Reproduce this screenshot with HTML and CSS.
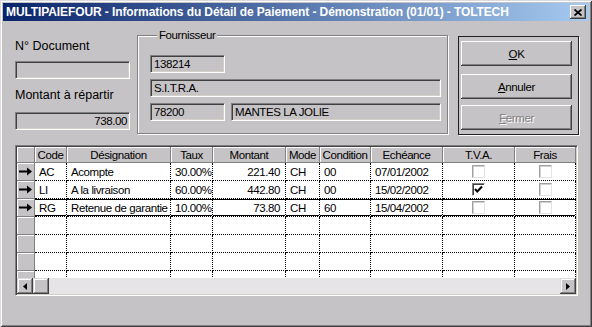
FILE: index.html
```html
<!DOCTYPE html>
<html lang="fr">
<head>
    <meta charset="UTF-8">
    <title>MULTIPAIEFOUR</title>
    <link rel="stylesheet" href="styles.css">
</head>
<body>
<div class="win">
    <div class="title">
        <span class="title-text">MULTIPAIEFOUR - Informations du Détail de Paiement - Démonstration (01/01) - TOLTECH</span>
        <span class="close"><svg width="8" height="7" viewBox="0 0 8 7"><path d="M0.5 0.5 L7.5 6.5 M7.5 0.5 L0.5 6.5" stroke="#000" stroke-width="1.7" fill="none"/></svg></span>
    </div>
    <div class="client">
        <div class="top">
            <div class="left">
                <label class="lbl lbl-1">N° Document</label>
                <div class="fld fld-doc"></div>
                <label class="lbl lbl-2">Montant à répartir</label>
                <div class="fld fld-mt">738.00</div>
            </div>
            <fieldset class="group">
                <legend>Fournisseur</legend>
                <div class="g-line"><div class="fld w-code">138214</div></div>
                <div class="g-line"><div class="fld w-full">S.I.T.R.A.</div></div>
                <div class="g-line"><div class="fld w-code">78200</div><div class="fld w-city">MANTES LA JOLIE</div></div>
            </fieldset>
            <div class="btns">
                <button class="btn"><u>O</u>K</button>
                <button class="btn btn-2"><u>A</u>nnuler</button>
                <button class="btn btn-3 off"><u>F</u>ermer</button>
            </div>
        </div>

        <div class="grid">
            <div class="row head">
                <div class="h"></div>
                <div class="h">Code</div>
                <div class="h">Désignation</div>
                <div class="h">Taux</div>
                <div class="h">Montant</div>
                <div class="h">Mode</div>
                <div class="h">Condition</div>
                <div class="h">Echéance</div>
                <div class="h">T.V.A.</div>
                <div class="h">Frais</div>
            </div>
            <div class="g-body">
                <div class="row">
                    <div class="ind"><svg width="14" height="9" viewBox="0 0 14 9"><path d="M0 3.5h9v2H0z M8 0.5 L13 4.5 L8 8.5z" fill="#000"/></svg></div>
                    <div class="c">AC</div>
                    <div class="c">Acompte</div>
                    <div class="c r">30.00%</div>
                    <div class="c r m">221.40</div>
                    <div class="c">CH</div>
                    <div class="c">00</div>
                    <div class="c">07/01/2002</div>
                    <div class="c ck"><span class="chk"></span></div>
                    <div class="c ck"><span class="chk"></span></div>
                </div>
                <div class="row">
                    <div class="ind"><svg width="14" height="9" viewBox="0 0 14 9"><path d="M0 3.5h9v2H0z M8 0.5 L13 4.5 L8 8.5z" fill="#000"/></svg></div>
                    <div class="c">LI</div>
                    <div class="c">A la livraison</div>
                    <div class="c r">60.00%</div>
                    <div class="c r m">442.80</div>
                    <div class="c">CH</div>
                    <div class="c">00</div>
                    <div class="c">15/02/2002</div>
                    <div class="c ck"><span class="chk on"><svg width="9" height="9" viewBox="0 0 9 9"><path d="M1 4 L3.3 6.5 L8 1.5" stroke="#000" stroke-width="2" fill="none"/></svg></span></div>
                    <div class="c ck"><span class="chk"></span></div>
                </div>
                <div class="row sel">
                    <div class="ind"><svg width="14" height="9" viewBox="0 0 14 9"><path d="M0 3.5h9v2H0z M8 0.5 L13 4.5 L8 8.5z" fill="#000"/></svg></div>
                    <div class="c">RG</div>
                    <div class="c">Retenue de garantie</div>
                    <div class="c r">10.00%</div>
                    <div class="c r m">73.80</div>
                    <div class="c">CH</div>
                    <div class="c">60</div>
                    <div class="c">15/04/2002</div>
                    <div class="c ck"><span class="chk"></span></div>
                    <div class="c ck"><span class="chk"></span></div>
                </div>
                <div class="row">
                    <div class="ind"></div><div class="c"></div><div class="c"></div><div class="c"></div><div class="c"></div><div class="c"></div><div class="c"></div><div class="c"></div><div class="c"></div><div class="c"></div>
                </div>
                <div class="row">
                    <div class="ind"></div><div class="c"></div><div class="c"></div><div class="c"></div><div class="c"></div><div class="c"></div><div class="c"></div><div class="c"></div><div class="c"></div><div class="c"></div>
                </div>
                <div class="row">
                    <div class="ind"></div><div class="c"></div><div class="c"></div><div class="c"></div><div class="c"></div><div class="c"></div><div class="c"></div><div class="c"></div><div class="c"></div><div class="c"></div>
                </div>
                <div class="row">
                    <div class="ind"></div><div class="c"></div><div class="c"></div><div class="c"></div><div class="c"></div><div class="c"></div><div class="c"></div><div class="c"></div><div class="c"></div><div class="c"></div>
                </div>
            </div>
            <div class="hscroll">
                <div class="sb"><svg width="4" height="7" viewBox="0 0 4 7"><path d="M4 0v7L0 3.5z" fill="#000"/></svg></div>
                <div class="sb thumb"></div>
                <div class="track"></div>
                <div class="sb"><svg width="4" height="7" viewBox="0 0 4 7"><path d="M0 0v7l4-3.5z" fill="#000"/></svg></div>
            </div>
        </div>
    </div>
</div>
</body>
</html>
```

FILE: styles.css
```css
*{
    box-sizing: border-box;
}
body{
    margin: 0;
    background: #c6c3c6;
    font-family: "Liberation Sans", Arial, sans-serif;
    font-size: 12px;
    color: #000;
}
.win{
    width: 592px;
    height: 327px;
    padding: 3px;
    background: #c6c3c6;
    box-shadow: inset 1px 1px #dcdadc, inset -1px -1px #404040, inset 2px 2px #fff, inset -2px -2px #808080;
    display: flex;
    flex-direction: column;
}
/* barre de titre */
.title{
    height: 18px;
    flex: none;
    display: flex;
    align-items: center;
    justify-content: space-between;
    background: linear-gradient(to right, #0a246a, #a6caf0);
    padding: 0 3px 0 3px;
}
.title-text{
    color: #fff;
    font-weight: bold;
    font-size: 12px;
    letter-spacing: -0.1px;
    white-space: nowrap;
}
.close{
    width: 16px;
    height: 14px;
    background: #c6c3c6;
    box-shadow: inset -1px -1px #404040, inset 1px 1px #fff, inset -2px -2px #808080;
    display: flex;
    align-items: center;
    justify-content: center;
    padding-top: 1px;
}
.client{
    flex: 1;
    padding: 7px 0 0 12px;
}
.top{
    display: flex;
    align-items: flex-start;
}
/* colonne gauche */
.left{
    width: 115px;
    display: flex;
    flex-direction: column;
}
.lbl{
    font-size: 12.5px;
    line-height: 16px;
    height: 16px;
}
.lbl-1{ margin-top: 10px; }
.fld-doc{ margin-top: 7px; }
.lbl-2{ margin-top: 8px; }
.fld-mt{ margin-top: 9px; text-align: right; padding-right: 3px; }

.fld, .group legend, .btn, .grid{
    font-size: 11.5px;
    letter-spacing: -0.4px;
}
.fld{
    height: 18px;
    border: 1px solid;
    border-color: #808080 #fff #fff #808080;
    box-shadow: inset 1px 1px #404040, inset -1px -1px #d4d0c8;
    padding: 1px 2px 0 3px;
    line-height: 15px;
    white-space: nowrap;
}
/* groupe fournisseur */
.group{
    margin: 0 0 0 7px;
    width: 311px;
    padding: 13px 5px 12px 12px;
    border: 1px solid #808080;
    box-shadow: inset 1px 1px #fff, 1px 1px #fff;
    min-width: 0;
}
.group legend{
    margin-left: 7px;
    padding: 0 2px;
    background: #c6c3c6;
    line-height: 14px;
}
.g-line{
    display: flex;
    gap: 6px;
    margin-bottom: 6px;
}
.g-line:last-child{
    margin-bottom: 0;
}
.w-code{ width: 75px; }
.w-full{ width: 291px; }
.w-city{ width: 210px; }
/* boutons */
.btns{
    margin: 8px 0 0 10px;
    width: 121px;
    height: 99px;
    border: 1px solid #202020;
    box-shadow: 1px 1px #fff;
    padding: 4px 5px 0 2px;
    display: flex;
    flex-direction: column;
}
.btn{
    height: 25px;
    width: 111px;
    border: 0;
    margin: 0;
    background: #c6c3c6;
    box-shadow: inset -1px -1px #404040, inset 1px 1px #fff, inset -2px -2px #808080;
    font-family: "Liberation Sans", Arial, sans-serif;
    color: #000;
    padding: 0;
}
.btn-2{ margin-top: 8px; }
.btn-3{ margin-top: 6px; }
.btn.off{
    color: #808080;
    text-shadow: 1px 1px #fff;
}
/* grille */
.grid{
    margin-top: 10px;
    width: 563px;
    border: 1px solid;
    border-color: #808080 #fff #fff #808080;
    box-shadow: inset 1px 1px #404040, inset -1px -1px #d4d0c8;
    padding: 1px;
}
.row{
    display: grid;
    grid-template-columns: 18px 32px 104px 42px 73px 34px 51px 72px 72px 61px;
    height: 18px;
}
.row.head{
    height: 16px;
}
.h{
    background: #c6c3c6;
    border-right: 1px solid #808080;
    border-bottom: 1px solid #808080;
    box-shadow: inset 1px 1px #fff;
    text-align: center;
    padding-top: 1px;
    line-height: 14px;
    white-space: nowrap;
    overflow: hidden;
}
.g-body{
    height: 115px;
    overflow: hidden;
}
.ind{
    background: #c6c3c6;
    border-right: 1px solid #808080;
    border-bottom: 1px solid #808080;
    box-shadow: inset 1px 1px #fff;
    display: flex;
    align-items: center;
    justify-content: center;
}
.c{
    background: #fff;
    border-right: 1px dotted #000;
    border-bottom: 1px dotted #000;
    padding: 1px 3px 0 4px;
    line-height: 16px;
    white-space: nowrap;
    overflow: hidden;
}
.c.r{
    text-align: right;
    padding-right: 2px;
}
.c.m{
    padding-right: 5px;
}
.c.ck{
    display: flex;
    align-items: center;
    justify-content: center;
    padding: 0;
}
.row.sel .c{
    box-shadow: inset 0 1px #000, inset 0 -1px #000;
}
.chk{
    width: 13px;
    height: 13px;
    background: #fff;
    border: 1px solid;
    border-color: #a0a0a0 #e4e4e4 #e4e4e4 #a0a0a0;
    box-shadow: inset 1px 1px #d0d0d0;
    display: flex;
    align-items: center;
    justify-content: center;
}
.chk.on{
    border-color: #808080 #fff #fff #808080;
    box-shadow: inset 1px 1px #404040;
}
/* ascenseur horizontal */
.hscroll{
    display: flex;
    height: 16px;
    background: #e6e4e6;
}
.sb{
    width: 16px;
    height: 16px;
    flex: none;
    background: #c6c3c6;
    box-shadow: inset -1px -1px #404040, inset 1px 1px #dcdadc, inset -2px -2px #808080, inset 2px 2px #fff;
    display: flex;
    align-items: center;
    justify-content: center;
}
.track{
    flex: 1;
}
```
